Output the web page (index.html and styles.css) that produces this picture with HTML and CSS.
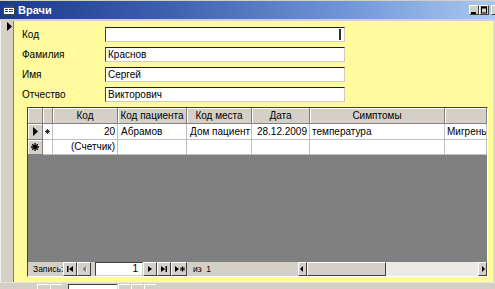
FILE: index.html
```html
<!DOCTYPE html>
<html>
<head>
<meta charset="utf-8">
<title>Врачи</title>
<link rel="stylesheet" href="styles.css">
</head>
<body>
<div class="win">
  <div class="titlebar">
    <svg class="appicon" width="12" height="10" viewBox="0 0 12 10">
      <rect x="0.5" y="0.5" width="11" height="9" fill="#fff" stroke="#404040"/>
      <rect x="1" y="1" width="10" height="2" fill="#2a4a9a"/>
      <rect x="2" y="4" width="3" height="1" fill="#404040"/>
      <rect x="6" y="4" width="4" height="1" fill="#404040"/>
      <rect x="2" y="6" width="3" height="1" fill="#404040"/>
      <rect x="6" y="6" width="4" height="1" fill="#404040"/>
    </svg>
    <span class="title">Врачи</span>
    <div class="tbtns">
      <span class="tbtn"><svg width="8" height="8" viewBox="0 0 8 8"><rect x="1" y="6" width="5" height="2" fill="#000"/></svg></span>
      <span class="tbtn"><svg width="8" height="8" viewBox="0 0 8 8"><rect x="1.5" y="1" width="5" height="6" fill="none" stroke="#000"/><rect x="1" y="0.5" width="6" height="2" fill="#000"/></svg></span>
      <span class="tbtn"></span>
    </div>
  </div>

  <div class="body">
    <div class="selector">
      <svg width="5" height="9" viewBox="0 0 5 9"><polygon points="0,0 5,4.5 0,9" fill="#000"/></svg>
    </div>
    <div class="form">
      <div class="field"><span class="lbl">Код</span><div class="inp"><span class="caret"></span></div></div>
      <div class="field"><span class="lbl">Фамилия</span><div class="inp">Краснов</div></div>
      <div class="field"><span class="lbl">Имя</span><div class="inp">Сергей</div></div>
      <div class="field"><span class="lbl">Отчество</span><div class="inp">Викторович</div></div>

      <div class="sub">
        <div class="grow head">
          <div class="c"></div>
          <div class="c"></div>
          <div class="c">Код</div>
          <div class="c">Код пациента</div>
          <div class="c">Код места</div>
          <div class="c">Дата</div>
          <div class="c">Симптомы</div>
          <div class="c"></div>
        </div>
        <div class="grow data r1">
          <div class="c sel"><svg width="5" height="9" viewBox="0 0 5 9"><polygon points="0,0 5,4.5 0,9" fill="#000"/></svg></div>
          <div class="c mini"><svg width="5" height="5" viewBox="0 0 5 5"><path d="M2.5 0V5M0 2.5H5M0.7 0.7L4.3 4.3M4.3 0.7L0.7 4.3" stroke="#000" stroke-width="0.8"/></svg></div>
          <div class="c right">20</div>
          <div class="c">Абрамов</div>
          <div class="c">Дом пациент</div>
          <div class="c right">28.12.2009</div>
          <div class="c">температура</div>
          <div class="c">Мигрень</div>
        </div>
        <div class="grow data r2">
          <div class="c sel"><svg width="8" height="8" viewBox="0 0 8 8"><path d="M4 0V8M0 4H8M1.2 1.2L6.8 6.8M6.8 1.2L1.2 6.8" stroke="#000" stroke-width="1.3"/></svg></div>
          <div class="c mini"></div>
          <div class="c right">(Счетчик)</div>
          <div class="c"></div>
          <div class="c"></div>
          <div class="c"></div>
          <div class="c"></div>
          <div class="c"></div>
        </div>
        <div class="empty"></div>
        <div class="nav">
          <span class="navlbl">Запись:</span>
          <span class="nb"><svg width="12" height="12" viewBox="0 0 12 12"><rect x="3" y="3" width="1.5" height="6" fill="#000"/><polygon points="9,3 9,9 5,6" fill="#000"/></svg></span>
          <span class="nb"><svg width="12" height="12" viewBox="0 0 12 12"><polygon points="8,3 8,9 4.5,6" fill="#808080"/><polygon points="8.5,4 8.5,10 9,10 9,4" fill="#fff"/></svg></span>
          <span class="navinp">1</span>
          <span class="nb"><svg width="12" height="12" viewBox="0 0 12 12"><polygon points="4,3 4,9 8,6" fill="#000"/></svg></span>
          <span class="nb"><svg width="12" height="12" viewBox="0 0 12 12"><polygon points="3,3 3,9 7,6" fill="#000"/><rect x="7.5" y="3" width="1.5" height="6" fill="#000"/></svg></span>
          <span class="nb wide"><svg width="13" height="12" viewBox="0 0 13 12"><polygon points="2,3 2,9 6,6" fill="#000"/><path d="M9.5 3.5V8.5M7 6H12M7.8 4.3L11.2 7.7M11.2 4.3L7.8 7.7" stroke="#000" stroke-width="1"/></svg></span>
          <span class="navof">из&nbsp;&nbsp;1</span>
          <div class="hscroll">
            <span class="sb"><svg width="7" height="10" viewBox="0 0 7 10"><polygon points="4,2 4,8 1,5" fill="#000"/></svg></span>
            <span class="thumb"></span>
            <span class="track"></span>
            <span class="sb"><svg width="7" height="10" viewBox="0 0 7 10"><polygon points="3,2 3,8 6,5" fill="#000"/></svg></span>
          </div>
        </div>
      </div>
    </div>
    <div class="edge"></div>
  </div>

  <div class="outnav">
    <span class="ob"></span>
    <span class="ob"></span>
    <span class="oinp"></span>
    <span class="ob"></span>
    <span class="ob"></span>
    <span class="ob"></span>
  </div>
</div>
</body>
</html>
```

FILE: styles.css
```css
* { box-sizing: border-box; }
html, body { margin: 0; padding: 0; }
body {
  font-family: "Liberation Sans", Arial, sans-serif;
  font-size: 10px;
  color: #000;
  background: #d4d0c8;
}
.win {
  width: 495px;
  height: 289px;
  overflow: hidden;
  display: flex;
  flex-direction: column;
  background: #d4d0c8;
}

/* title bar */
.titlebar {
  flex: none;
  height: 19px;
  border-top: 1px solid #d4d0c8;
  display: flex;
  align-items: center;
  padding-left: 3px;
  background: linear-gradient(to right, #1a3a8e 0%, #3f62ae 35%, #7196d6 70%, #a9c9f1 100%);
}
.appicon { flex: none; display: block; }
.title {
  color: #fff;
  font-weight: bold;
  font-size: 11px;
  margin-left: 3px;
}
.tbtns {
  margin-left: auto;
  display: flex;
  margin-right: -6px;
  flex: none;
}
.tbtn {
  flex: none;
  width: 10px;
  height: 10px;
  background: #d4d0c8;
  border: 1px solid;
  border-color: #fff #404040 #404040 #fff;
  display: flex;
  align-items: center;
  justify-content: center;
}
.tbtn svg { display: block; }
.tbtn:nth-child(3) { margin-left: 2px; }

/* body */
.body {
  flex: none;
  height: 261px;
  margin-top: 2px;
  display: flex;
}
.selector {
  flex: none;
  width: 14px;
  background: #d4d0c8;
  border-right: 1px solid #808080;
  border-left: 1px solid #f0f0f0;
  padding: 1px 0 0 6px;
}
.selector svg { display: block; }
.form {
  flex: none;
  width: 479px;
  background: #fffa9b;
  padding: 6px 0 0 8px;
  display: flex;
  flex-direction: column;
  gap: 5px;
}
.edge {
  flex: 1;
  background: #d4d0c8;
  border-left: 1px solid #e8e4dc;
}

.field {
  display: flex;
  align-items: center;
  height: 15px;
}
.lbl {
  width: 83px;
  flex: none;
}
.inp {
  position: relative;
  width: 240px;
  height: 15px;
  background: #fff;
  border: 1px solid;
  border-color: #202020 #d0cdc0 #d0cdc0 #404040;
  padding-left: 2px;
  line-height: 13px;
  white-space: nowrap;
}
.caret {
  position: absolute;
  right: 3px;
  top: 1px;
  width: 2px;
  height: 11px;
  background: #303030;
}

/* subform */
.sub {
  margin-left: 5px;
  width: 461px;
  height: 170px;
  border: 1px solid;
  border-color: #404040 #fff #fff #404040;
  display: flex;
  flex-direction: column;
  background: #808080;
  overflow: hidden;
}
.grow {
  flex: none;
  display: grid;
  grid-template-columns: 15px 10px 65px 69px 65px 58px 135px 42px;
}
.c {
  overflow: hidden;
  white-space: nowrap;
  padding: 0 2px;
}
.head { height: 16px; }
.head .c {
  background: #d4d0c8;
  border-right: 1px solid #808080;
  border-bottom: 1px solid #808080;
  box-shadow: inset 1px 1px 0 #fff;
  text-align: center;
  line-height: 15px;
}
.data .c {
  background: #fff;
  border-right: 1px solid #c0c0c0;
  border-bottom: 1px solid #c0c0c0;
}
.data .c:nth-child(4), .data .c:nth-child(5) { padding-left: 3px; }
.r1 { height: 16px; }
.r1 .c { line-height: 15px; }
.r2 { height: 15px; }
.r2 .c { line-height: 14px; }
.data .c.sel {
  background: #d4d0c8;
  border-right: 1px solid #808080;
  border-bottom: 1px solid #808080;
  box-shadow: inset 1px 1px 0 #fff;
  display: flex;
  align-items: center;
  justify-content: center;
}
.sel svg, .mini svg { display: block; }
.data .c.mini {
  display: flex;
  align-items: center;
  justify-content: center;
  padding: 0;
}
.right { text-align: right; }

.empty { flex: 1; background: #808080; }

.nav {
  flex: none;
  height: 14px;
  background: #d4d0c8;
  display: flex;
  align-items: center;
  padding-left: 5px;
  font-size: 8.5px;
}
.navlbl { width: 30px; flex: none; line-height: 14px; white-space: nowrap; }
.nb {
  flex: none;
  width: 14px;
  height: 14px;
  background: #d4d0c8;
  border: 1px solid;
  border-color: #fff #404040 #404040 #fff;
  display: flex;
  align-items: center;
  justify-content: center;
}
.nb svg { display: block; }
.nb.wide { width: 16px; }
.navinp {
  flex: none;
  width: 48px;
  height: 14px;
  margin-left: 4px;
  background: #fff;
  border: 1px solid;
  border-color: #404040 #d4d0c8 #d4d0c8 #404040;
  text-align: right;
  padding-right: 4px;
  line-height: 12px;
  font-size: 10px;
}
.navof { flex: none; margin-left: 6px; line-height: 14px; }
.hscroll {
  margin-left: auto;
  width: 189px;
  height: 14px;
  display: flex;
  flex: none;
}
.sb {
  flex: none;
  width: 9px;
  height: 14px;
  background: #d4d0c8;
  border: 1px solid;
  border-color: #fff #404040 #404040 #fff;
  display: flex;
  align-items: center;
  justify-content: center;
}
.sb svg { display: block; }
.thumb {
  flex: none;
  width: 79px;
  height: 14px;
  background: #d4d0c8;
  border: 1px solid;
  border-color: #fff #404040 #404040 #fff;
}
.track {
  flex: 1;
  height: 14px;
  background: #eceae4;
}

/* bottom navigation of the main form (partly visible) */
.outnav {
  flex: none;
  height: 7px;
  display: flex;
  padding: 1px 0 0 37px;
  gap: 1px;
  border-top: 1px solid #e8e4dc;
}
.ob {
  flex: none;
  width: 12px;
  height: 12px;
  background: #d4d0c8;
  border-top: 1px solid #fff;
  border-left: 1px solid #fff;
}
.ob:nth-child(2) { margin-right: 5px; }
.oinp {
  flex: none;
  width: 49px;
  height: 12px;
  background: #fff;
  border-top: 1px solid #404040;
  border-left: 1px solid #404040;
}
```
